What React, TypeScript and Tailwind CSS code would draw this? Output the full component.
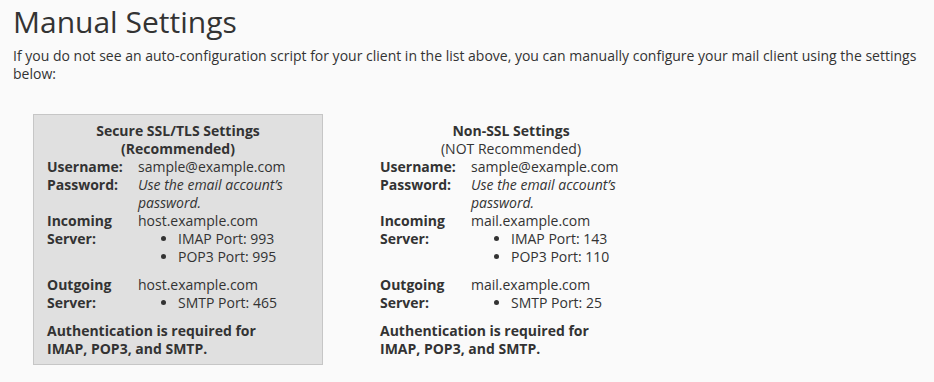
import React from "react";

type Cfg = {
  title: string;
  sub: string;
  subBold: boolean;
  boxed: boolean;
  inHost: string;
  imap: string;
  pop: string;
  outHost: string;
  smtp: string;
};

function Box({ c }: { c: Cfg }) {
  return (
    <div
      className={
        "w-[290px] border px-[13px] pt-[7px] pb-[6px] " +
        (c.boxed ? "bg-[#e0e0e0] border-[#c6c6c6]" : "bg-transparent border-transparent")
      }
    >
      <div className="text-center">
        <div className="font-bold">{c.title}</div>
        <div className={c.subBold ? "font-bold" : "font-normal"}>{c.sub}</div>
      </div>
      <div className="grid grid-cols-[91px_1fr]">
        <div className="font-bold">Username:</div>
        <div>sample@example.com</div>
        <div className="font-bold">Password:</div>
        <div className="italic">Use the email account’s password.</div>
        <div className="font-bold mb-[10px]">Incoming Server:</div>
        <div className="mb-[10px]">
          <div>{c.inHost}</div>
          <ul className="list-disc pl-10">
            <li>IMAP Port: {c.imap}</li>
            <li>POP3 Port: {c.pop}</li>
          </ul>
        </div>
        <div className="font-bold mb-[10px]">Outgoing Server:</div>
        <div className="mb-[10px]">
          <div>{c.outHost}</div>
          <ul className="list-disc pl-10">
            <li>SMTP Port: {c.smtp}</li>
          </ul>
        </div>
      </div>
      <div className="font-bold">
        Authentication is required for
        <br />
        IMAP, POP3, and SMTP.
      </div>
    </div>
  );
}

export default function App() {
  const ssl: Cfg = {
    title: "Secure SSL/TLS Settings",
    sub: "(Recommended)",
    subBold: true,
    boxed: true,
    inHost: "host.example.com",
    imap: "993",
    pop: "995",
    outHost: "host.example.com",
    smtp: "465",
  };
  const non: Cfg = {
    title: "Non-SSL Settings",
    sub: "(NOT Recommended)",
    subBold: false,
    boxed: false,
    inHost: "mail.example.com",
    imap: "143",
    pop: "110",
    outHost: "mail.example.com",
    smtp: "25",
  };
  return (
    <div
      className="min-h-[382px] w-[934px] bg-[#fafafa] px-[13px] text-[#333333] text-[14px] leading-[18px]"
      style={{ fontFamily: '"Open Sans", "Noto Sans", sans-serif' }}
    >
      <h1 className="pt-[4px] text-[30px] leading-[36px] font-normal">Manual Settings</h1>
      <p className="mt-[7px]">
        If you do not see an auto-configuration script for your client in the list above, you can manually
        configure your mail client using the settings below:
      </p>
      <div className="mt-[31px] ml-[20px] flex gap-[43px]">
        <Box c={ssl} />
        <Box c={non} />
      </div>
    </div>
  );
}
